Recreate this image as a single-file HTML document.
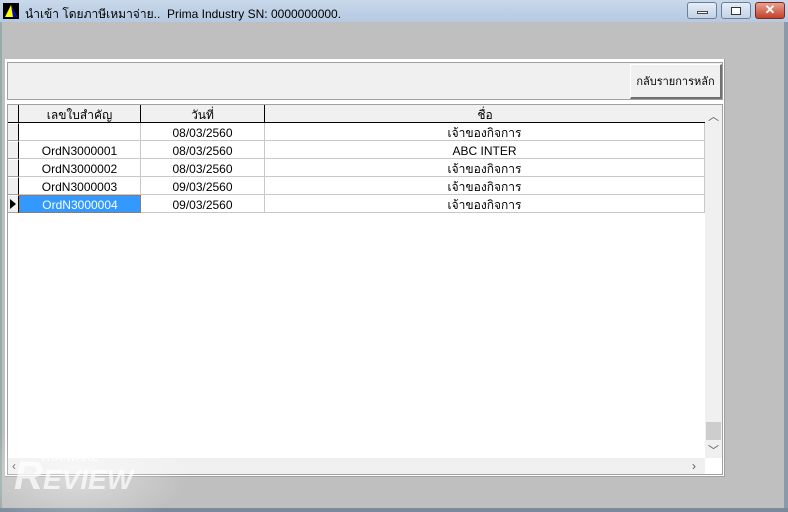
<!DOCTYPE html>
<html><head><meta charset="utf-8"><style>
*{margin:0;padding:0;box-sizing:border-box}
body{width:788px;height:512px;overflow:hidden;background:#bfbfbf;font-family:"Liberation Sans","Noto Sans CJK SC",sans-serif;font-size:12px;position:relative}
.a{position:absolute}
.title{left:0;top:0;width:788px;height:22px;background:linear-gradient(#c9d8ea,#b5c9e2);}
.cell{position:absolute;height:18px;line-height:20px;text-align:center;border-right:1px solid #c8c8c8;border-bottom:1px solid #c8c8c8;background:#fff;color:#000}
.rh{position:absolute;left:8px;width:11px;height:18px;background:#f0f0f0;border-top:1px solid #fff;border-right:1px solid #000;border-bottom:1px solid #a0a0a0}
.wb{position:absolute;top:2px;height:17px;border:1px solid #6d7e96;border-radius:3px;background:linear-gradient(#e5edf7,#c3d2e6)}
</style></head><body>
<div class="a title"></div>
<svg class="a" style="left:3px;top:3px" width="16" height="16"><rect width="16" height="16" fill="#000"/><polygon points="2,14 8,2 14,14" fill="#ff0"/><polygon points="8,2 14,14 10,14" fill="#00c"/></svg>
<div class="a" style="left:25px;top:5px;font-size:12px;color:#000">นำเข้า โดยภาษีเหมาจ่าย..&nbsp; Prima Industry SN: 0000000000.</div>
<div class="wb" style="left:687px;width:30px"><div class="a" style="left:9px;top:8px;width:11px;height:3px;background:#fff;border:1px solid #444"></div></div>
<div class="wb" style="left:721px;width:30px"><div class="a" style="left:9px;top:4px;width:10px;height:8px;border:1px solid #333;background:#fff"></div></div>
<div class="wb" style="left:755px;width:30px;background:linear-gradient(#e8a090,#c5402a);border-color:#7a2a20;color:#fff;text-align:center;font-weight:bold;line-height:14px;font-size:13px">✕</div>
<div class="a" style="left:0;top:22px;width:2px;height:490px;background:#9aa"></div>
<div class="a" style="left:784px;top:22px;width:4px;height:490px;background:#8a9aaa"></div>
<div class="a" style="left:0;top:508px;width:788px;height:4px;background:#7a8a9a"></div>
<div class="a" style="left:5px;top:59px;width:720px;height:418px;background:#fff;border-right:1px solid #a0a0a0;border-bottom:1px solid #a0a0a0"></div>
<div class="a" style="left:7px;top:62px;width:716px;height:38px;background:#f0f0f0;border:1px solid #a0a0a0"></div>
<div class="a" style="left:630px;top:64px;width:92px;height:35px;background:#f0f0f0;border:1px solid #fff;border-right:2px solid #707070;border-bottom:2px solid #707070;text-align:center;line-height:34px;font-size:11px">กลับรายการหลัก</div>
<div class="a" style="left:7px;top:104px;width:716px;height:371px;background:#fff;border:1px solid #a0a0a0"></div>
<div class="a" style="left:8px;top:105px;width:697px;height:18px;background:#f0f0f0;border-bottom:1px solid #000"></div>
<div class="a" style="left:8px;top:105px;width:11px;height:18px;border-right:1px solid #000"></div>
<div class="a" style="left:19px;top:105px;width:122px;height:18px;border-right:1px solid #000;text-align:center;line-height:20px">เลขใบสำคัญ</div>
<div class="a" style="left:141px;top:105px;width:124px;height:18px;border-right:1px solid #000;text-align:center;line-height:20px">วันที่</div>
<div class="a" style="left:265px;top:105px;width:440px;height:18px;text-align:center;line-height:20px">ชื่อ</div>
<div class="rh" style="top:123px"></div><div class="cell" style="left:19px;top:123px;width:122px"></div><div class="cell" style="left:141px;top:123px;width:124px">08/03/2560</div><div class="cell" style="left:265px;top:123px;width:440px">เจ้าของกิจการ</div>
<div class="rh" style="top:141px"></div><div class="cell" style="left:19px;top:141px;width:122px">OrdN3000001</div><div class="cell" style="left:141px;top:141px;width:124px">08/03/2560</div><div class="cell" style="left:265px;top:141px;width:440px">ABC INTER</div>
<div class="rh" style="top:159px"></div><div class="cell" style="left:19px;top:159px;width:122px">OrdN3000002</div><div class="cell" style="left:141px;top:159px;width:124px">08/03/2560</div><div class="cell" style="left:265px;top:159px;width:440px">เจ้าของกิจการ</div>
<div class="rh" style="top:177px"></div><div class="cell" style="left:19px;top:177px;width:122px">OrdN3000003</div><div class="cell" style="left:141px;top:177px;width:124px">09/03/2560</div><div class="cell" style="left:265px;top:177px;width:440px">เจ้าของกิจการ</div>
<div class="rh" style="top:195px"><svg class="a" style="left:2px;top:3px" width="7" height="10"><polygon points="0,0 6,5 0,10" fill="#000"/></svg></div><div class="cell" style="left:19px;top:195px;width:122px;background:#3399ff;color:#fff;border:1px dotted #c60;line-height:18px">OrdN3000004</div><div class="cell" style="left:141px;top:195px;width:124px">09/03/2560</div><div class="cell" style="left:265px;top:195px;width:440px">เจ้าของกิจการ</div>
<div class="a" style="left:705px;top:105px;width:17px;height:353px;background:#f0f0f0"></div>
<div class="a" style="left:708px;top:108px;font-size:11px;color:#555">︿</div>
<div class="a" style="left:706px;top:422px;width:15px;height:18px;background:#cdcdcd"></div>
<div class="a" style="left:708px;top:442px;font-size:11px;color:#555">﹀</div>
<div class="a" style="left:8px;top:458px;width:697px;height:16px;background:#f0f0f0"></div>
<div class="a" style="left:12px;top:459px;font-size:12px;color:#555">‹</div>
<div class="a" style="left:692px;top:459px;font-size:12px;color:#555">›</div>
<div class="a" style="left:0;top:420px;width:190px;height:92px;background:radial-gradient(ellipse at 40% 60%,rgba(255,255,255,.45),rgba(255,255,255,0) 70%)"></div>
<div class="a" style="left:40px;top:452px;font-size:11px;color:rgba(255,255,255,.8);font-weight:bold">THAIWARE</div>
<div class="a" style="left:14px;top:454px;font-size:40px;color:rgba(255,255,255,.7);font-style:italic;font-weight:bold">R<span style="font-size:28px">EVIEW</span></div>
</body></html>
